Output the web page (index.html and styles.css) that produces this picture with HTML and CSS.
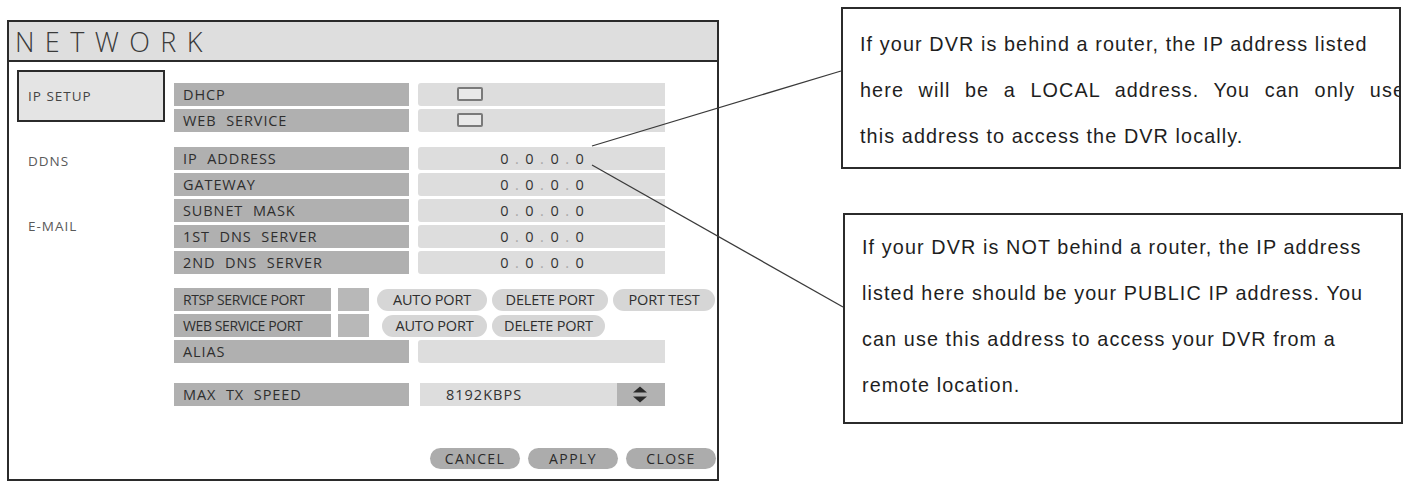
FILE: index.html
```html
<!DOCTYPE html>
<html lang="en">

<head>
    <meta charset="utf-8">
    <meta name="viewport" content="width=device-width, initial-scale=1.0">
    <title>Network setup</title>
    <link rel="stylesheet" href="styles.css">
</head>

<body>
    <div class="side">

        <section class="dvr">
            <div class="dvr-title">NETWORK</div>
            <div class="dvr-body">
                <nav class="tabs">
                    <div class="tab valgt">IP SETUP</div>
                    <div class="tab">DDNS</div>
                    <div class="tab">E-MAIL</div>
                </nav>

                <div class="form">
                    <div class="group">
                        <div class="row">
                            <div class="label">DHCP</div>
                            <div class="value"><span class="check"></span></div>
                        </div>
                        <div class="row">
                            <div class="label">WEB SERVICE</div>
                            <div class="value"><span class="check"></span></div>
                        </div>
                    </div>

                    <div class="group g-ip">
                        <div class="row">
                            <div class="label">IP ADDRESS</div>
                            <div class="value ip">0<i>.</i>0<i>.</i>0<i>.</i>0</div>
                        </div>
                        <div class="row">
                            <div class="label">GATEWAY</div>
                            <div class="value ip">0<i>.</i>0<i>.</i>0<i>.</i>0</div>
                        </div>
                        <div class="row">
                            <div class="label">SUBNET MASK</div>
                            <div class="value ip">0<i>.</i>0<i>.</i>0<i>.</i>0</div>
                        </div>
                        <div class="row">
                            <div class="label">1ST DNS SERVER</div>
                            <div class="value ip">0<i>.</i>0<i>.</i>0<i>.</i>0</div>
                        </div>
                        <div class="row">
                            <div class="label">2ND DNS SERVER</div>
                            <div class="value ip">0<i>.</i>0<i>.</i>0<i>.</i>0</div>
                        </div>
                    </div>

                    <div class="group g-port">
                        <div class="port-row">
                            <div class="label smal">RTSP SERVICE PORT</div>
                            <div class="port-box"></div>
                            <div class="pills">
                                <span class="pill w-auto">AUTO PORT</span>
                                <span class="pill w-del">DELETE PORT</span>
                                <span class="pill w-test">PORT TEST</span>
                            </div>
                        </div>
                        <div class="port-row">
                            <div class="label smal">WEB SERVICE PORT</div>
                            <div class="port-box"></div>
                            <div class="pills second">
                                <span class="pill w-auto2">AUTO PORT</span>
                                <span class="pill w-del2">DELETE PORT</span>
                            </div>
                        </div>
                        <div class="row">
                            <div class="label">ALIAS</div>
                            <div class="value"></div>
                        </div>
                    </div>

                    <div class="group g-speed">
                        <div class="row">
                            <div class="label">MAX TX SPEED</div>
                            <div class="value speed">
                                <span class="speed-text">8192KBPS</span>
                                <span class="spin">
                                    <svg width="16" height="17" viewBox="0 0 16 17">
                                        <polygon points="1,6.5 8,0.5 15,6.5" fill="#2a2a2a" />
                                        <polygon points="1,10.5 8,16.5 15,10.5" fill="#2a2a2a" />
                                    </svg>
                                </span>
                            </div>
                        </div>
                    </div>

                    <div class="actions">
                        <button>CANCEL</button>
                        <button>APPLY</button>
                        <button>CLOSE</button>
                    </div>
                </div>
            </div>
        </section>

        <div class="notes">
            <div class="note">
                <span class="line">If your DVR is behind a router, the IP address listed</span>
                <span class="line just">here will be a LOCAL address. You can only use</span>
                <span class="line">this address to access the DVR locally.</span>
            </div>
            <div class="note note2">
                <span class="line">If your DVR is NOT behind a router, the IP address</span>
                <span class="line">listed here should be your PUBLIC IP address. You</span>
                <span class="line">can use this address to access your DVR from a</span>
                <span class="line">remote location.</span>
            </div>
        </div>

        <!-- streger fra noterne ind til IP-feltet -->
        <svg class="streger" width="1406" height="485" viewBox="0 0 1406 485">
            <line x1="592" y1="146" x2="841" y2="71" />
            <line x1="592" y1="165" x2="843" y2="307" />
        </svg>

    </div>
</body>

</html>
```

FILE: styles.css
```css
body {
    margin: 0;
    background-color: white;
    font-family: "Open Sans", sans-serif;
    color: #333;
}

.side {
    position: relative;
    display: flex;
    align-items: flex-start;
    width: 1406px;
    height: 485px;
}

/* selve DVR-vinduet */

.dvr {
    box-sizing: border-box;
    width: 712px;
    height: 461px;
    margin: 20px 0 0 7px;
    border: 2px solid #2b2b2b;
    background-color: white;
}

.dvr-title {
    height: 38px;
    line-height: 39px;
    padding-left: 6px;
    border-bottom: 2px solid #2b2b2b;
    background-color: #dedede;
    font-size: 27px;
    font-weight: 300;
    letter-spacing: 10.4px;
    color: #3a3a3a;
}

.dvr-body {
    display: flex;
}

.tabs {
    width: 148px;
    padding: 8px 0 0 8px;
}

.tab {
    box-sizing: border-box;
    height: 52px;
    margin-bottom: 13px;
    padding-left: 9px;
    border: 2px solid transparent;
    display: flex;
    align-items: center;
    font-size: 13.5px;
    letter-spacing: 1px;
    color: #5a5a5a;
}

.tab.valgt {
    border-color: #2b2b2b;
    background-color: #e4e4e4;
    color: #444;
}

.form {
    width: 543px;
    margin-left: 9px;
    padding-top: 21px;
}

.group {
    display: flex;
    flex-direction: column;
    gap: 3px;
}

.g-ip {
    margin-top: 15px;
}

.g-port {
    margin-top: 14px;
}

.g-speed {
    margin-top: 20px;
}

.row {
    display: grid;
    grid-template-columns: 235px 247px;
    column-gap: 9px;
    height: 23px;
}

.label {
    background-color: #b0b0b0;
    padding-left: 9px;
    line-height: 23px;
    font-size: 14.5px;
    letter-spacing: 0.9px;
    word-spacing: 5px;
    color: #2e2e2e;
    white-space: nowrap;
}

.label.smal {
    font-size: 14px;
    letter-spacing: -0.4px;
    word-spacing: 0;
    width: 148px;
}

.value {
    background-color: #dddddd;
    border-radius: 3px 0 0 3px;
    line-height: 23px;
    font-size: 14.5px;
    letter-spacing: 1px;
    color: #333;
}

.check {
    display: block;
    box-sizing: border-box;
    width: 26px;
    height: 14px;
    margin: 4px 0 0 39px;
    border: 2px solid #7a7a7a;
    border-radius: 2px;
    background-color: #e9e9e9;
}

.ip {
    text-align: center;
    padding-left: 2px;
}

.ip i {
    font-style: normal;
    color: #a8a8a8;
    margin: 0 5.5px;
}

/* port-rækkerne med runde knapper */

.port-row {
    display: flex;
    align-items: center;
    height: 23px;
}

.port-box {
    width: 31px;
    height: 23px;
    margin-left: 7px;
    background-color: #b8b8b8;
}

.pills {
    display: flex;
    gap: 5px;
    margin-left: 8px;
}

.pills.second {
    margin-left: 13px;
}

.pill {
    height: 22px;
    border-radius: 11px;
    background-color: #d6d6d6;
    text-align: center;
    line-height: 22px;
    font-size: 14.5px;
    letter-spacing: -0.2px;
    color: #2e2e2e;
}

.w-auto { width: 110px; }
.w-del { width: 116px; }
.w-test { width: 102px; }
.w-auto2 { width: 105px; }
.w-del2 { width: 113px; }

.speed {
    display: flex;
    background-color: transparent;
}

.speed-text {
    flex: 1;
    margin-left: 2px;
    padding-left: 26px;
    background-color: #dddddd;
}

.spin {
    width: 45px;
    background-color: #b2b2b2;
    display: flex;
    align-items: center;
    justify-content: center;
    padding-right: 3px;
}

.actions {
    display: flex;
    justify-content: flex-end;
    gap: 8px;
    margin-top: 42px;
    margin-right: 1px;
}

.actions button {
    width: 90px;
    height: 21px;
    padding: 0;
    border: none;
    border-radius: 11px;
    background-color: #acacac;
    font-family: "Open Sans", sans-serif;
    font-size: 14px;
    letter-spacing: 1.4px;
    color: #2a2a2a;
}

/* forklarende noter til højre */

.notes {
    margin-left: 122px;
    padding-top: 7px;
}

.note {
    box-sizing: border-box;
    width: 560px;
    height: 162px;
    padding: 12px 0 0 17px;
    border: 2px solid #2b2b2b;
    overflow: hidden;
    font-family: "Liberation Sans", Arial, sans-serif;
    font-size: 19.8px;
    letter-spacing: 1.1px;
    line-height: 46px;
    color: #1e1e1e;
}

.note2 {
    height: 211px;
    margin: 44px 0 0 2px;
    padding-top: 9px;
}

.line {
    display: block;
    white-space: nowrap;
}

.line.just {
    width: 545px;
    text-align: justify;
    text-align-last: justify;
}

.streger {
    position: absolute;
    top: 0;
    left: 0;
    pointer-events: none;
}

.streger line {
    stroke: #3a3a3a;
    stroke-width: 1.3;
}
```
